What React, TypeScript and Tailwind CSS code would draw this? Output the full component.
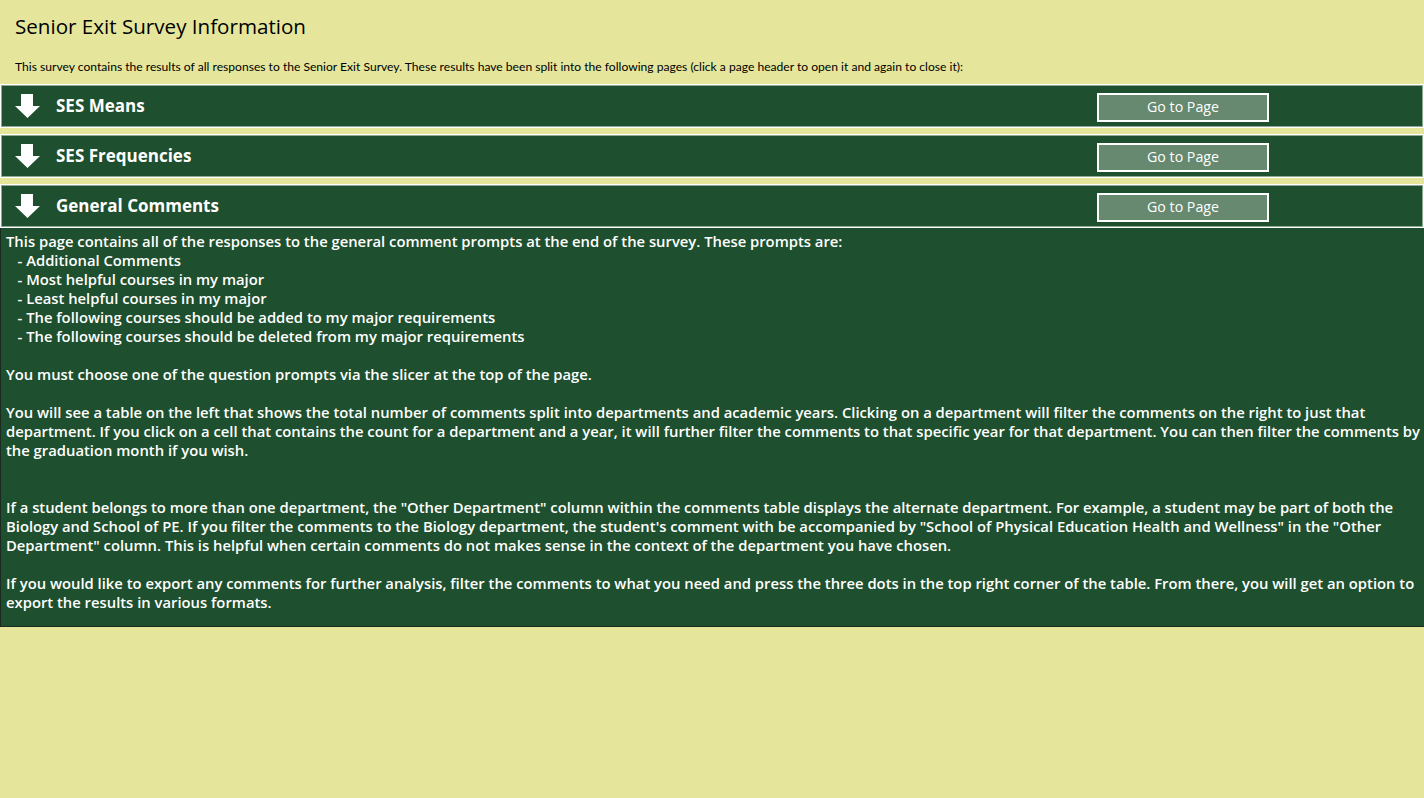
const sections = ['SES Means', 'SES Frequencies', 'General Comments'];

const body: string[][] = [
  [
    'This page contains all of the responses to the general comment prompts at the end of the survey. These prompts are:',
    '   - Additional Comments',
    '   - Most helpful courses in my major',
    '   - Least helpful courses in my major',
    '   - The following courses should be added to my major requirements',
    '   - The following courses should be deleted from my major requirements',
  ],
  ['You must choose one of the question prompts via the slicer at the top of the page.'],
  [
    'You will see a table on the left that shows the total number of comments split into departments and academic years. Clicking on a department will filter the comments on the right to just that',
    'department. If you click on a cell that contains the count for a department and a year, it will further filter the comments to that specific year for that department. You can then filter the comments by',
    'the graduation month if you wish.',
    '',
  ],
  [
    'If a student belongs to more than one department, the "Other Department" column within the comments table displays the alternate department. For example, a student may be part of both the',
    'Biology and School of PE. If you filter the comments to the Biology department, the student\'s comment with be accompanied by "School of Physical Education Health and Wellness" in the "Other',
    'Department" column. This is helpful when certain comments do not makes sense in the context of the department you have chosen.',
  ],
  [
    'If you would like to export any comments for further analysis, filter the comments to what you need and press the three dots in the top right corner of the table. From there, you will get an option to',
    'export the results in various formats.',
  ],
];

function DownArrow() {
  return (
    <svg width="25" height="24" viewBox="0 0 25 24" className="shrink-0">
      <polygon points="6,0 18,0 18,12 25,12 12.5,24 0,12 6,12" fill="white" />
    </svg>
  );
}

function SectionBar({ title }: { title: string }) {
  return (
    <div className="border border-white">
      <div className="flex items-center h-[42px] bg-[#1e4f2e] border border-[#8fa993]">
        <div className="pl-[13px]">
          <DownArrow />
        </div>
        <span className="ml-[16px] text-[17px] font-bold text-white">{title}</span>
        <button className="ml-auto mr-[153px] mt-[2px] w-[172px] h-[29px] bg-[#66896f] border-2 border-white text-white text-[14.2px]">
          Go to Page
        </button>
      </div>
    </div>
  );
}

export default function App() {
  return (
    <div className="min-h-[798px] bg-[#e5e69b] font-['Open_Sans','Liberation_Sans',sans-serif]">
      <div className="pt-[13px] pl-[15px]">
        <h1 className="text-[20.6px] leading-[26px] text-black">Senior Exit Survey Information</h1>
        <p className="mt-[19px] font-['Lato','Open_Sans',sans-serif] text-[12.1px] leading-[17px] text-black">
          This survey contains the results of all responses to the Senior Exit Survey. These results have been split into the following pages (click a page header to open it and again to close it):
        </p>
      </div>
      <div className="mt-[9px] flex flex-col gap-[6px]">
        {sections.map((s) => (
          <SectionBar key={s} title={s} />
        ))}
      </div>
      <div className="bg-[#1e4f2e] border-l border-b border-[#1a2a1e] pl-[5px] pt-[4px] pb-[14px] text-white text-[14.8px] font-semibold leading-[19px] whitespace-pre">
        {body.map((para, i) => (
          <div key={i} className={i > 0 ? 'mt-[19px]' : ''}>
            {para.map((line, j) => (
              <div key={j} className="h-[19px]">
                {line}
              </div>
            ))}
          </div>
        ))}
      </div>
    </div>
  );
}
